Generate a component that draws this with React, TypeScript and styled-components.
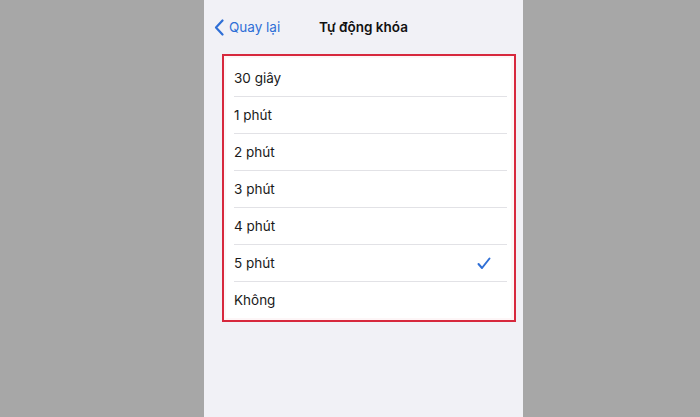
import React from "react";
import styled, { createGlobalStyle } from "styled-components";

const Global = createGlobalStyle`
  html, body { margin: 0; padding: 0; }
  body { font-family: "Inter", "Liberation Sans", Arial, sans-serif; }
`;

const Page = styled.div`
  width: 700px;
  height: 417px;
  background: #a7a7a7;
  display: flex;
  justify-content: center;
  overflow: hidden;
`;

const Screen = styled.div`
  width: 319px;
  height: 417px;
  margin-left: 27px;
  background: #f1f1f6;
  display: flex;
  flex-direction: column;
`;

const NavBar = styled.div`
  height: 54px;
  display: grid;
  grid-template-columns: 1fr auto 1fr;
  align-items: center;
  padding: 0 10px;
  box-sizing: border-box;
`;

const Back = styled.div`
  display: flex;
  align-items: center;
  gap: 5px;
  color: #2f6fd6;
  font-size: 13.5px;
`;

const Title = styled.div`
  font-size: 13.5px;
  font-weight: 600;
  color: #111;
`;

const Frame = styled.div`
  margin: 0 7px 0 18px;
  border: 2.5px solid #d7283d;
  padding: 2px 3px 2px 2px;
  background: #fdf6f7;
`;

const Card = styled.div`
  background: #ffffff;
  padding: 2px 0 0 8px;
`;

const Row = styled.div<{ $last?: boolean }>`
  height: 36px;
  display: flex;
  align-items: center;
  justify-content: space-between;
  padding-right: 16px;
  font-size: 13.5px;
  color: #1a1a1a;
  border-bottom: ${(p) => (p.$last ? "none" : "1px solid #e2e2e6")};
  margin-right: 4px;
`;

const items = ["30 giây", "1 phút", "2 phút", "3 phút", "4 phút", "5 phút", "Không"];

export default function App() {
  return (
    <>
      <Global />
      <Page>
        <Screen>
          <NavBar>
            <Back>
              <svg width="10" height="17" viewBox="0 0 10 17" fill="none">
                <path d="M8.5 1.5L2 8.5L8.5 15.5" stroke="#2f6fd6" strokeWidth="2.2" strokeLinecap="round" strokeLinejoin="round" />
              </svg>
              <span>Quay lại</span>
            </Back>
            <Title>Tự động khóa</Title>
            <div />
          </NavBar>
          <Frame>
            <Card>
              {items.map((t, i) => (
                <Row key={t} $last={i === items.length - 1}>
                  <span>{t}</span>
                  {t === "5 phút" && (
                    <svg width="14" height="13" viewBox="0 0 14 13" fill="none">
                      <path d="M1.5 7L5 11L12.5 1.5" stroke="#2f6fd6" strokeWidth="2" strokeLinecap="round" strokeLinejoin="round" />
                    </svg>
                  )}
                </Row>
              ))}
            </Card>
          </Frame>
        </Screen>
      </Page>
    </>
  );
}
